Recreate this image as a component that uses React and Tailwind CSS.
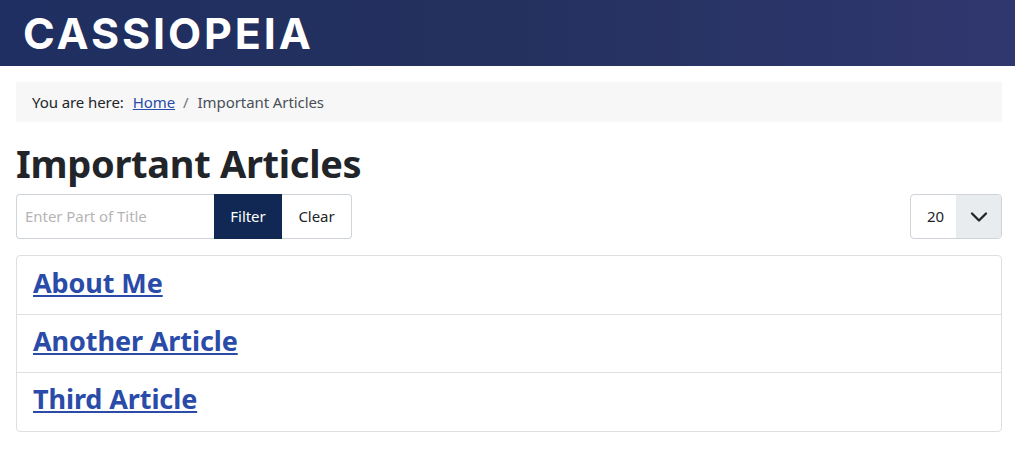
import React from "react";
import { ChevronDown } from "lucide-react";

const articles = ["About Me", "Another Article", "Third Article"];

const App = () => {
  return (
    <div className="min-h-[465px] bg-white font-['Noto_Sans',sans-serif] text-[#212529]">
      <header className="h-[66px] flex items-center pl-[23px] bg-gradient-to-r from-[#1f2f61] via-[#24315f] to-[#30376f]">
        <span className="font-['Inter',sans-serif] font-bold text-[43px] leading-none tracking-[2.9px] text-white">
          CASSIOPEIA
        </span>
      </header>
      <main className="pl-4 pr-[13px] pt-4">
        <nav className="h-10 flex items-center px-4 bg-[#f7f7f7] text-[15px] tracking-[-0.08px]">
          <span className="mr-[9px]">You are here:</span>
          <a href="#" className="text-[#2a4ba8] underline">Home</a>
          <span className="ml-2 mr-[9px] text-[#6c757d]">/</span>
          <span className="text-[#495057]">Important Articles</span>
        </nav>
        <h1 className="mt-[13px] mb-[2px] h-[57px] text-[38px] leading-[57px] font-bold tracking-[-0.3px]">Important Articles</h1>
        <div className="h-[45px] flex justify-between">
          <div className="flex text-[15px] tracking-[-0.05px]">
            <input
              placeholder="Enter Part of Title"
              className="w-[198px] pl-2 border border-r-0 border-[#ced4da] rounded-l outline-none placeholder:text-[#b5b5b5]"
            />
            <button className="w-[68px] bg-[#112855] text-white">Filter</button>
            <button className="w-[70px] border border-l-0 border-[#ced4da] rounded-r">Clear</button>
          </div>
          <div className="w-[92px] flex border border-[#ced4da] rounded text-[15px] overflow-hidden">
            <span className="w-[45px] pl-1 flex items-center justify-center">20</span>
            <span className="flex-1 flex items-center justify-center bg-[#e9ecef]">
              <ChevronDown size={28} strokeWidth={2} className="text-[#212529]" />
            </span>
          </div>
        </div>
        <ul className="mt-[16px] border border-[#dfdfdf] rounded">
          {articles.map((title, i) => (
            <li key={title} className={`flex items-center px-4 ${i > 0 ? "border-t border-[#dfdfdf]" : ""} ${i === 2 ? "h-[59px] pb-[6px]" : "h-[58px] pb-1"}`}>
              <a href="#" className="text-[27px] font-bold text-[#2a4ba8] underline tracking-[-0.1px]">{title}</a>
            </li>
          ))}
        </ul>
      </main>
    </div>
  );
};

export default App;
